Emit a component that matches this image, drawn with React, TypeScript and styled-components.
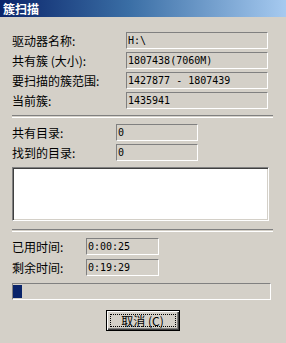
import React from "react";
import styled, { createGlobalStyle } from "styled-components";

const Global = createGlobalStyle`
  html, body { margin: 0; padding: 0; background: #d4d0c8; }
  body { font-family: "Noto Sans CJK SC", "Noto Sans", sans-serif; font-size: 12px; color: #000; }
`;

const Window = styled.div`
  width: 286px;
  height: 343px;
  background: #d4d0c8;
  display: flex;
  flex-direction: column;
  overflow: hidden;
`;

const TitleBar = styled.div`
  height: 17px;
  background: linear-gradient(to right, #0a246a 0%, #3a6ea5 45%, #a6caf0 100%);
  color: #fff;
  font-weight: 700;
  font-size: 12px;
  line-height: 17px;
  padding-left: 3px;
  flex: none;
`;

const Body = styled.div`
  display: flex;
  flex-direction: column;
  padding-left: 12px;
`;

const Rows = styled.div<{ $top: number; $gap: number }>`
  display: flex;
  flex-direction: column;
  gap: ${(p) => p.$gap}px;
  margin-top: ${(p) => p.$top}px;
`;

const Row = styled.div<{ $labelW: number }>`
  display: grid;
  grid-template-columns: ${(p) => p.$labelW}px auto;
  align-items: center;
  height: 17px;
`;

const Label = styled.span`
  white-space: nowrap;
  font-size: 12px;
  line-height: 17px;
`;

const Field = styled.div<{ $w: number }>`
  width: ${(p) => p.$w}px;
  height: 17px;
  box-sizing: border-box;
  border-top: 1px solid #808080;
  border-left: 1px solid #808080;
  border-right: 1px solid #fff;
  border-bottom: 1px solid #fff;
  padding-left: 1px;
  font-family: "DejaVu Sans Mono", "Liberation Mono", monospace;
  font-size: 10px;
  line-height: 15px;
  white-space: nowrap;
  overflow: hidden;
`;

const Separator = styled.div<{ $top: number }>`
  width: 261px;
  height: 1px;
  border-top: 1px solid #808080;
  border-bottom: 1px solid #fff;
  margin-top: ${(p) => p.$top}px;
`;

const ListBox = styled.div`
  width: 257px;
  height: 54px;
  box-sizing: border-box;
  margin-top: 6px;
  background: #fff;
  border-top: 1px solid #808080;
  border-left: 1px solid #808080;
  border-right: 1px solid #fff;
  border-bottom: 1px solid #fff;
  box-shadow: inset 1px 1px 0 #404040, inset -1px -1px 0 #d4d0c8;
`;

const Progress = styled.div`
  width: 259px;
  height: 17px;
  box-sizing: border-box;
  margin-top: 7px;
  border-top: 1px solid #808080;
  border-left: 1px solid #808080;
  border-right: 1px solid #fff;
  border-bottom: 1px solid #fff;
  padding: 1px 0 1px 0;
  display: flex;
`;

const ProgressFill = styled.div`
  height: 100%;
  background: #0a246a;
`;

const ButtonRow = styled.div`
  display: flex;
  justify-content: center;
  margin-top: 10px;
  padding-right: 12px;
`;

const Button = styled.button`
  position: relative;
  width: 74px;
  height: 21px;
  box-sizing: border-box;
  margin-left: -1px;
  border: 1px solid #000;
  background: #d4d0c8;
  box-shadow: inset 1px 1px 0 #fff, inset -1px -1px 0 #404040, inset -2px -2px 0 #808080;
  font-family: "Noto Sans CJK SC", "Noto Sans", sans-serif;
  font-size: 12px;
  color: #000;
  padding: 0;
  line-height: 17px;
  white-space: pre;
  &::after {
    content: "";
    position: absolute;
    inset: 3px;
    border: 1px dotted #000;
  }
`;

export default function App() {
  return (
    <>
      <Global />
      <Window>
        <TitleBar>簇扫描</TitleBar>
        <Body>
          <Rows $top={15} $gap={3}>
            <Row $labelW={114}>
              <Label>驱动器名称:</Label>
              <Field $w={142}>H:\</Field>
            </Row>
            <Row $labelW={114}>
              <Label>共有簇 (大小):</Label>
              <Field $w={142}>1807438(7060M)</Field>
            </Row>
            <Row $labelW={114}>
              <Label>要扫描的簇范围:</Label>
              <Field $w={142}>1427877 - 1807439</Field>
            </Row>
            <Row $labelW={114}>
              <Label>当前簇:</Label>
              <Field $w={142}>1435941</Field>
            </Row>
          </Rows>
          <Separator $top={6} />
          <Rows $top={6} $gap={3}>
            <Row $labelW={104}>
              <Label>共有目录:</Label>
              <Field $w={82}>0</Field>
            </Row>
            <Row $labelW={104}>
              <Label>找到的目录:</Label>
              <Field $w={82}>0</Field>
            </Row>
          </Rows>
          <ListBox />
          <Separator $top={8} />
          <Rows $top={6} $gap={4}>
            <Row $labelW={74}>
              <Label>已用时间:</Label>
              <Field $w={73}>0:00:25</Field>
            </Row>
            <Row $labelW={74}>
              <Label>剩余时间:</Label>
              <Field $w={73}>0:19:29</Field>
            </Row>
          </Rows>
          <Progress>
            <ProgressFill style={{ width: 9 }} />
          </Progress>
          <ButtonRow>
            <Button>取消 (C)</Button>
          </ButtonRow>
        </Body>
      </Window>
    </>
  );
}
